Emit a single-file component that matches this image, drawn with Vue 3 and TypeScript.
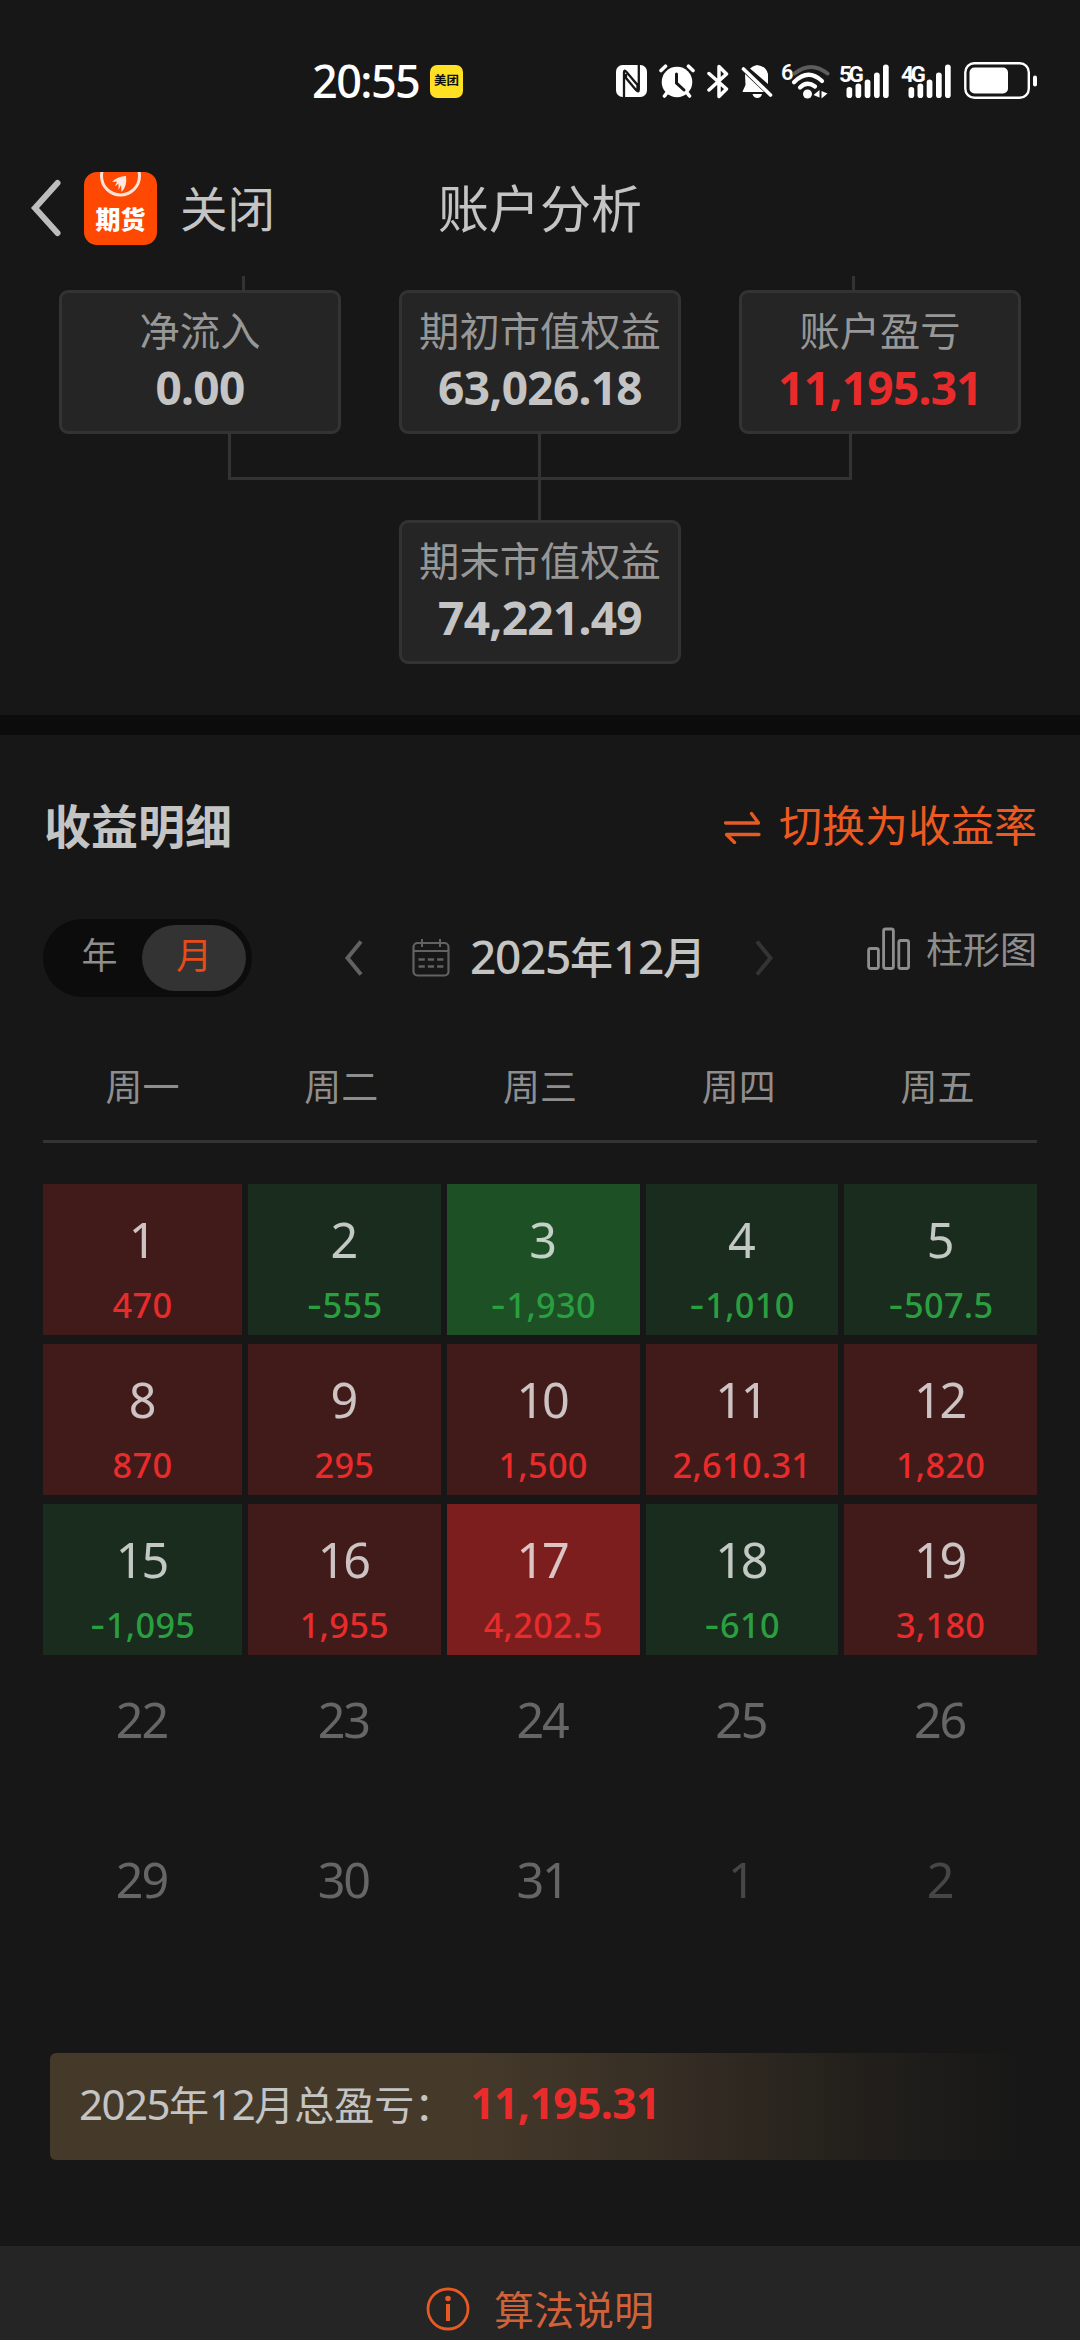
<script setup lang="ts">
interface Day {
  day: number
  value?: string
  tone?: 'up' | 'up-strong' | 'down' | 'down-strong'
  state?: 'idle' | 'next'
}

const weekdays: string[] = ['周一', '周二', '周三', '周四', '周五']

const days: Day[] = [
  { day: 1, value: '470', tone: 'up' },
  { day: 2, value: '-555', tone: 'down' },
  { day: 3, value: '-1,930', tone: 'down-strong' },
  { day: 4, value: '-1,010', tone: 'down' },
  { day: 5, value: '-507.5', tone: 'down' },
  { day: 8, value: '870', tone: 'up' },
  { day: 9, value: '295', tone: 'up' },
  { day: 10, value: '1,500', tone: 'up' },
  { day: 11, value: '2,610.31', tone: 'up' },
  { day: 12, value: '1,820', tone: 'up' },
  { day: 15, value: '-1,095', tone: 'down' },
  { day: 16, value: '1,955', tone: 'up' },
  { day: 17, value: '4,202.5', tone: 'up-strong' },
  { day: 18, value: '-610', tone: 'down' },
  { day: 19, value: '3,180', tone: 'up' },
  { day: 22, state: 'idle' },
  { day: 23, state: 'idle' },
  { day: 24, state: 'idle' },
  { day: 25, state: 'idle' },
  { day: 26, state: 'idle' },
  { day: 29, state: 'idle' },
  { day: 30, state: 'idle' },
  { day: 31, state: 'idle' },
  { day: 1, state: 'next' },
  { day: 2, state: 'next' },
]

const accounts = [
  { label: '净流入', value: '0.00', up: false },
  { label: '期初市值权益', value: '63,026.18', up: false },
  { label: '账户盈亏', value: '11,195.31', up: true },
]

const signalBars = [
  { x: 1.5, y: 23 },
  { x: 10.5, y: 19.5 },
  { x: 19.7, y: 15.5 },
  { x: 29, y: 8.5 },
  { x: 38, y: 0.5 },
]
const networks: string[] = ['5G', '4G']
</script>

<template>
  <div class="page">
    <div class="status">
      <span class="clock">20:55</span>
      <span class="badge">美团</span>
      <div class="tray">
        <svg class="nfc" width="31" height="32" viewBox="0 0 31 32">
          <rect width="31" height="32" rx="6.500" fill="#fff" />
          <path d="M8 32V7.500Q8 4 10.500 7L21.500 20V25M22.800 0V24.500Q22.800 28 20 25L10 13V9" fill="none" stroke="#171717" stroke-width="2.300" />
          <path d="M11 31.500V19L21 31.500ZM20 .5V12L10.500 .5Z" fill="#fff" />
        </svg>
        <svg class="alarm" width="36" height="34" viewBox="0 0 36 34">
          <circle cx="18" cy="18" r="15.300" fill="#fff" />
          <path d="M8.500 28 5.500 32M27.500 28 30.500 32M2 6.500 6.500 2.200M34 6.500 29.500 2.200" stroke="#fff" stroke-width="3.600" stroke-linecap="round" />
          <path d="M17.500 10V19L25 26" fill="none" stroke="#171717" stroke-width="3" stroke-linecap="round" />
        </svg>
        <svg class="bt" width="22" height="35" viewBox="0 0 22 35">
          <path d="M2 9.500 19.500 25 12 32.500V2.500L19.500 10 2 26" fill="none" stroke="#fff" stroke-width="3.500" stroke-linecap="round" stroke-linejoin="round" />
        </svg>
        <svg class="bell" width="32" height="34" viewBox="0 0 32 34">
          <path d="M4 10 23 28H2.500Q1 28 2 26.500L4.500 21ZM9 4.500Q12 1.500 16 1Q25 2 27 10V20Z" fill="#fff" />
          <path d="M11.500 30H21Q20 34 16.300 34T11.500 30Z" fill="#fff" />
          <path d="M2.500 5 29.500 31" stroke="#fff" stroke-width="3.600" stroke-linecap="round" />
        </svg>
        <span class="six">6</span>
        <svg class="wifi" width="40" height="35" viewBox="0 0 40 35">
          <path d="M3.500 9.500Q20 -3.500 36.500 9.500" fill="none" stroke="#5c5c5c" stroke-width="4" stroke-linecap="round" />
          <path d="M3 18.200Q17 4 31 17M9 23.500Q16 16.500 24 22.500" fill="none" stroke="#fff" stroke-width="4.200" stroke-linecap="round" />
          <circle cx="16.500" cy="30" r="4.500" fill="#fff" />
          <path d="M28.500 26V33.500L22.500 31ZM30.500 34.500V27L36.500 29.500Z" fill="#fff" />
        </svg>
        <div v-for="n in networks" :key="n" class="net">
          <span class="gen">{{ n }}</span>
          <svg class="bars" width="44" height="35" viewBox="0 0 44 35">
            <rect v-for="b in signalBars" :key="b.x" :x="b.x" :y="b.y" width="5.700" :height="34 - b.y" rx="2.800" fill="#fff" />
          </svg>
        </div>
        <svg class="battery" width="74" height="38" viewBox="0 0 74 38">
          <rect x="1.300" y="1.300" width="63.500" height="34.500" rx="9" fill="none" stroke="#fff" stroke-width="2.400" />
          <rect x="5.500" y="5.500" width="38.500" height="26" rx="5" fill="#fff" />
          <rect x="69" y="13.500" width="4" height="11" rx="2" fill="#fff" />
        </svg>
      </div>
    </div>

    <div class="header">
      <div class="nav">
        <svg width="36" height="60" viewBox="0 0 36 60">
          <path d="M31.500 5 9 30 31.500 55" fill="none" stroke="#bdbdbd" stroke-width="6" stroke-linecap="round" />
        </svg>
        <div class="app">
          <svg width="73" height="30" viewBox="0 0 73 30">
            <circle cx="36.500" cy="4" r="19" fill="none" stroke="#ffe3d8" stroke-width="3" />
            <path d="M28 10Q33 4.500 42 4Q43.500 14 37.500 20L37 13 34.500 18 34.500 11.500 31 14.500 33 9.500Z" fill="#ffe8df" />
          </svg>
          <span class="app-name">期货</span>
        </div>
        <span class="close">关闭</span>
      </div>
      <span class="title">账户分析</span>
    </div>

    <div class="tree">
      <svg width="1080" height="14" viewBox="0 0 1080 14">
        <path d="M243.500 0V14M853.500 0V14" stroke="#333" stroke-width="3" />
      </svg>
      <div class="accounts">
        <div v-for="a in accounts" :key="a.label" class="card">
          <span class="card-label">{{ a.label }}</span>
          <span class="card-value" :class="{ red: a.up }">{{ a.value }}</span>
        </div>
      </div>
      <svg width="1080" height="86" viewBox="0 0 1080 86">
        <path d="M229.500 0V44.500H850.500V0M539.500 0V86" fill="none" stroke="#333" stroke-width="3" />
      </svg>
      <div class="card">
        <span class="card-label">期末市值权益</span>
        <span class="card-value">74,221.49</span>
      </div>
    </div>

    <div class="band"></div>

    <div class="detail">
      <div class="heading">
        <span class="heading-text">收益明细</span>
        <div class="switch">
          <svg width="37" height="33" viewBox="0 0 37 33">
            <path d="M1.500 12H34.500L27.500 2.500M35 23.500H2.500L10.500 31.500" fill="none" stroke="#e65a24" stroke-width="3.300" stroke-linecap="round" stroke-linejoin="round" />
          </svg>
          <span class="switch-text">切换为收益率</span>
        </div>
      </div>

      <div class="controls">
        <div class="toggle">
          <span class="option">年</span>
          <span class="option active">月</span>
        </div>
        <svg class="prev" width="20" height="38" viewBox="0 0 20 38">
          <path d="M17 2.500 3.500 19 17 35.500" fill="none" stroke="#626262" stroke-width="4" />
        </svg>
        <svg class="calendar" width="38" height="40" viewBox="0 0 38 40">
          <rect x="1.500" y="5" width="35" height="32.500" rx="4" fill="none" stroke="#626262" stroke-width="2.200" />
          <path d="M1.500 13H36.500M10 1V9M28 1V9" stroke="#626262" stroke-width="2" />
          <path d="M6.500 21.500H31.500M6.500 28.500H31.500" stroke="#626262" stroke-width="2.300" stroke-dasharray="6.300 3" />
        </svg>
        <span class="month"><b class="num">2025</b>年<b class="num">12</b>月</span>
        <svg class="next-month" width="20" height="38" viewBox="0 0 20 38">
          <path d="M3 2.500 16.500 19 3 35.500" fill="none" stroke="#343434" stroke-width="4" />
        </svg>
        <div class="chart">
          <svg width="44" height="44" viewBox="0 0 44 44">
            <g fill="none" stroke="#8e8e8e" stroke-width="2.800">
              <rect x="1.600" y="21.500" width="9.800" height="20" rx="2" />
              <rect x="16.600" y="2" width="9.800" height="39.500" rx="2" />
              <rect x="31.800" y="13.500" width="9.800" height="28" rx="2" />
            </g>
          </svg>
          <span class="chart-text">柱形图</span>
        </div>
      </div>

      <div class="week">
        <span v-for="w in weekdays" :key="w">{{ w }}</span>
      </div>

      <div class="grid">
        <div v-for="(d, i) in days" :key="i" class="cell" :class="[d.tone, d.state]">
          <span class="day">{{ d.day }}</span>
          <span v-if="d.value" class="value"><span v-if="d.value.startsWith('-')" class="sign">-</span>{{ d.value.replace('-', '') }}</span>
        </div>
      </div>

      <div class="summary">
        <span><span class="num">2025</span>年<span class="num">12</span>月总盈亏：</span>
        <b class="total">11,195.31</b>
      </div>
    </div>

    <div class="footer">
      <svg width="44" height="44" viewBox="0 0 44 44">
        <circle cx="22" cy="22" r="20" fill="none" stroke="#e65a24" stroke-width="2.800" />
        <circle cx="22" cy="11.500" r="2.800" fill="#e65a24" />
        <path d="M22 17V34" stroke="#e65a24" stroke-width="4" />
      </svg>
      <span class="footer-text">算法说明</span>
    </div>
  </div>
</template>

<style>
body {
  margin: 0;
  background: #171717;
}
</style>

<style scoped>
.page {
  width: 1080px;
  height: 2340px;
  overflow: hidden;
  background: #171717;
  color: #c4c4c4;
  font-family: 'Noto Sans', 'Noto Sans CJK SC', sans-serif;
}
svg {
  display: block;
  flex: none;
}
span {
  white-space: nowrap;
}

.status {
  display: flex;
  align-items: center;
  height: 162px;
  padding-left: 312px;
  color: #fff;
}
.clock {
  width: 118px;
  font-size: 45px;
  font-weight: 500;
  line-height: 60px;
  letter-spacing: -1.600px;
}
.badge {
  width: 33px;
  height: 33px;
  border-radius: 7px;
  background: #ffe023;
  color: #111;
  font-size: 12.500px;
  font-weight: 700;
  line-height: 32px;
  text-align: center;
}
.tray {
  display: flex;
  align-items: center;
  margin-left: 153px;
}
.alarm {
  margin-left: 12px;
}
.bt {
  margin-left: 12px;
}
.bell {
  margin-left: 12px;
}
.six {
  width: 10px;
  height: 38px;
  margin-left: 8px;
  font-family: 'Roboto', 'Noto Sans', sans-serif;
  font-size: 22px;
  font-weight: 600;
  line-height: 22px;
  letter-spacing: -2px;
}
.net {
  display: flex;
  width: 51px;
  margin-left: 8px;
}
.net + .net {
  margin-left: 11px;
}
.gen {
  width: 6px;
  height: 34px;
  font-family: 'Roboto', 'Noto Sans', sans-serif;
  font-size: 22.500px;
  font-weight: 700;
  line-height: 20px;
  letter-spacing: -3.500px;
}
.battery {
  margin-left: 12px;
}

.header {
  display: grid;
  grid-template-columns: 1fr auto 1fr;
  align-items: center;
  height: 92px;
}
.nav {
  display: flex;
  align-items: center;
  padding-left: 26px;
}
.app {
  width: 73px;
  height: 73px;
  margin-left: 22px;
  border-radius: 13px;
  overflow: hidden;
  background: #ff4802;
}
.app-name {
  display: block;
  color: #fff;
  font-size: 25px;
  font-weight: 900;
  line-height: 34px;
  text-align: center;
}
.close {
  margin-left: 23px;
  padding-bottom: 4px;
  font-size: 47.500px;
}
.title {
  padding-bottom: 4px;
  font-size: 51px;
}

.tree {
  display: flex;
  flex-direction: column;
  align-items: center;
  height: 439px;
  padding-top: 22px;
}
.accounts {
  display: flex;
  gap: 58px;
}
.card {
  display: flex;
  flex-direction: column;
  align-items: center;
  width: 282px;
  height: 144px;
  padding-top: 15px;
  box-sizing: border-box;
  border: 3px solid #333;
  border-radius: 9px;
  background: #252525;
}
.card-label {
  color: #979797;
  font-size: 40.300px;
  line-height: 46px;
}
.card-value {
  font-size: 46px;
  font-weight: 700;
  line-height: 66px;
  letter-spacing: -0.700px;
}
.red {
  color: #e92b2b;
}

.band {
  height: 20px;
  background: #0c0c0c;
}

.detail {
  padding: 0 43px;
}
.heading {
  display: flex;
  align-items: center;
  justify-content: space-between;
  height: 180px;
  margin-bottom: 4px;
}
.heading-text {
  margin-left: 1px;
  padding-bottom: 4px;
  font-size: 47px;
  font-weight: 700;
}
.switch {
  display: flex;
  align-items: center;
  gap: 18px;
  margin-top: 4px;
  color: #ec5a22;
  font-size: 43px;
}
.switch-text {
  padding-bottom: 8px;
}

.controls {
  display: flex;
  align-items: center;
  height: 78px;
}
.toggle {
  display: flex;
  align-items: center;
  width: 209px;
  height: 78px;
  padding: 6px 6px 6px 14px;
  box-sizing: border-box;
  border-radius: 39px;
  background: #0c0c0c;
}
.option {
  width: 85px;
  height: 66px;
  border-radius: 33px;
  color: #8e8e8e;
  font-size: 36px;
  line-height: 62px;
  text-align: center;
}
.option.active {
  width: 104px;
  background: #333;
  color: #e64c1a;
}
.prev {
  margin-left: 92px;
}
.calendar {
  margin-left: 48px;
}
.month {
  width: 264px;
  margin-left: 20px;
  padding-bottom: 5px;
  font-size: 43px;
  font-weight: 500;
}
.month .num {
  font-size: 46px;
  font-weight: 500;
  letter-spacing: -1.300px;
}
.next-month {
  margin-left: 20px;
}
.chart {
  display: flex;
  align-items: center;
  align-self: flex-start;
  gap: 15px;
  height: 60px;
  margin-left: auto;
  color: #8e8e8e;
  font-size: 37px;
}
.chart-text {
  padding-bottom: 2px;
}

.week {
  display: grid;
  grid-template-columns: repeat(5, 1fr);
  margin-top: 65px;
  padding-bottom: 28px;
  border-bottom: 3px solid #333;
  color: #8e8e8e;
  font-size: 37px;
  line-height: 50px;
  text-align: center;
}

.grid {
  display: grid;
  grid-template-columns: 199px repeat(4, 1fr);
  grid-auto-rows: 151px;
  gap: 9px 6px;
  margin-top: 41px;
}
.cell {
  display: flex;
  flex-direction: column;
  align-items: center;
  padding-top: 25px;
  box-sizing: border-box;
  color: rgba(255, 255, 255, 0.74);
}
.day {
  margin-right: 2px;
  font-size: 48.500px;
  line-height: 60px;
  letter-spacing: -2px;
}
.value {
  margin-top: 11px;
  font-size: 34.300px;
  font-weight: 500;
  line-height: 50px;
  letter-spacing: 0.300px;
}
.sign {
  font-family: 'Inter', 'Noto Sans', sans-serif;
}
.up {
  background: #411a1a;
}
.up-strong {
  background: #7c1e1e;
}
.down {
  background: #1a2c1d;
}
.down-strong {
  background: #1d5025;
}
.up .value,
.up-strong .value {
  color: #e82b2b;
}
.down .value,
.down-strong .value {
  color: #2a9f40;
}
.idle {
  color: #666;
}
.next {
  color: #464646;
}

.summary {
  display: flex;
  align-items: center;
  height: 107px;
  margin: 78px 7px 0;
  padding: 0 0 8px 29px;
  box-sizing: border-box;
  border-radius: 6px;
  background: linear-gradient(90deg, #453a2a 0%, #453a2a 42%, #362d24 63%, #24211c 81%, #171717 99%);
  font-size: 40px;
}
.summary .num {
  font-size: 42px;
  letter-spacing: -1.500px;
}
.total {
  margin-left: 16px;
  color: #e92b2b;
  font-size: 42.500px;
  letter-spacing: -0.500px;
}

.footer {
  display: flex;
  align-items: center;
  justify-content: center;
  gap: 24px;
  height: 126px;
  margin-top: 86px;
  background: #252525;
  color: #d0623a;
  font-size: 40px;
}
.footer-text {
  padding-bottom: 3px;
}
</style>
